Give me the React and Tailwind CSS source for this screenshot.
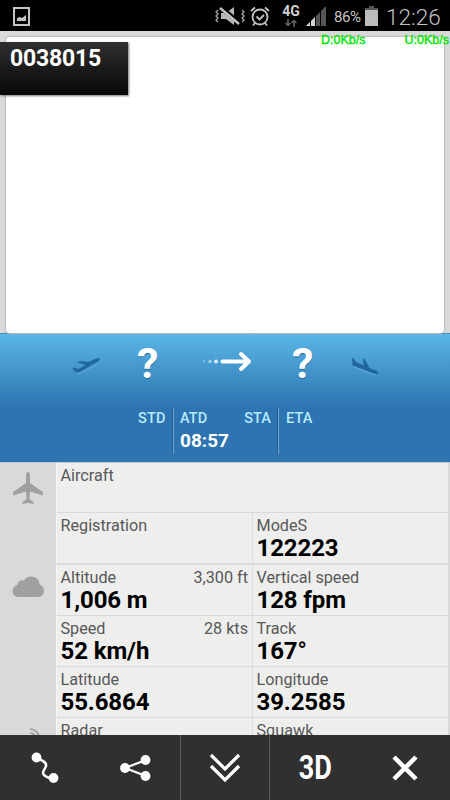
const FONT = 'font-[Roboto,sans-serif]';

const ROWS = [
  [{ label: 'Aircraft' }],
  [{ label: 'Registration' }, { label: 'ModeS', value: '122223' }],
  [
    { label: 'Altitude', value: '1,006 m', alt: '3,300 ft' },
    { label: 'Vertical speed', value: '128 fpm' },
  ],
  [
    { label: 'Speed', value: '52 km/h', alt: '28 kts' },
    { label: 'Track', value: '167°' },
  ],
  [
    { label: 'Latitude', value: '55.6864' },
    { label: 'Longitude', value: '39.2585' },
  ],
  [{ label: 'Radar' }, { label: 'Squawk' }],
];

function StatusBar() {
  return (
    <div className="flex h-[31px] shrink-0 items-start bg-black text-[#c4c4c4]">
      <svg className="mt-[7px] ml-[13px] shrink-0" width="17" height="19" viewBox="0 0 17 19">
        <path d="M1 1h15v17H1z" fill="none" stroke="currentColor" strokeWidth="2" />
        <path d="M4 14v-3l3-1 2 1 4-3v6z" fill="currentColor" />
      </svg>

      {/* Muted / vibrate */}
      <svg className="mt-[6px] ml-[185px] shrink-0" width="30" height="20" viewBox="0 0 30 20">
        <path d="M6 7h5l8-6v18l-8-6H6z" fill="#b8b8b8" />
        <path d="M5 1l20 16" stroke="#000" strokeWidth="4.500" />
        <path d="M5 2l19 16" stroke="#c4c4c4" strokeWidth="2.300" />
        <path d="M3 4l-2 2 2 2-2 2 2 2-2 2 2 2M27 4l2 2-2 2 2 2-2 2 2 2-2 2" fill="none" stroke="#a5a5a5" strokeWidth="1.300" />
      </svg>

      {/* Alarm */}
      <svg className="mt-[6px] ml-[5px] shrink-0" width="20" height="21" viewBox="0 0 20 21" fill="none" stroke="currentColor" strokeWidth="1.800">
        <circle cx="10" cy="11" r="7.500" />
        <path d="M6.500 10.500l3 3 4.500-4.500M1 5l4-3.500M19 5l-4-3.500M5 17l-2 2.500M15 17l2 2.500" />
      </svg>

      <div className="mt-[3px] ml-[12px] flex w-[18px] shrink-0 flex-col items-center">
        <span className="text-[14px] leading-[16px] font-bold text-[#d0d0d0]">4G</span>
        <svg width="12" height="8" viewBox="0 0 12 8" fill="none" stroke="#666" strokeWidth="1.500">
          <path d="M3 0v6.500M.5 4L3 6.500 5.500 4M9 8V1.500M6.500 4L9 1.500 11.500 4" />
        </svg>
      </div>

      {/* Signal strength */}
      <svg className="mt-[6px] ml-[6px] shrink-0" width="21" height="20" viewBox="0 0 21 20">
        <path d="M0 20L20 0v20z" fill="#565656" />
        <path d="M0 20L9 11v9z" fill="#d5d5d5" />
        <path d="M4.500 14v6M9.500 8v12M14.500 4v16" stroke="#000" strokeWidth="1" />
      </svg>
      <span className="mt-[8px] ml-[7px] w-[28px] shrink-0 text-[15px] leading-[18px] tracking-[-0.4px]">86%</span>

      {/* Battery */}
      <svg className="mt-[6px] ml-[3px] shrink-0" width="13" height="20" viewBox="0 0 13 20">
        <path d="M4 0h5v2h4v2H0V2h4z" fill="#565656" />
        <path d="M0 4h13v16H0z" fill="#bcbcbc" />
      </svg>
      <span className="mt-[4px] ml-[8px] text-[22.500px] leading-[26px] font-light">12:26</span>
    </div>
  );
}

function MapPanel() {
  return (
    <div className="relative h-[302px] shrink-0 bg-[#d9d9d9] px-[6px] pt-[6px]">
      <div className="h-[296px] rounded-[4px] bg-white shadow-[0_0_1px_1px_#bbb]" />
      <div className="absolute top-[11px] left-0 h-[53px] w-[127.500px] bg-linear-to-b from-[#303030] to-[#080808] pt-[3px] pl-[10px] text-[23px] leading-[28px] font-bold tracking-[-0.2px] text-white shadow-[1px_1px_2px_#777]">
        0038015
      </div>
      <div className="absolute top-[2px] right-[1px] flex gap-[39px] font-['Liberation_Sans',sans-serif] text-[12.500px] leading-[14px] text-[#00ee00] [-webkit-text-stroke:0.4px_#00dd00]">
        <span>D:0Kb/s</span>
        <span>U:0Kb/s</span>
      </div>
    </div>
  );
}

function FlightHeader() {
  return (
    <div className="h-[129px] shrink-0 border-t border-[#438bb5] bg-[#2d74b0] bg-linear-to-b from-[#5ab6e6] from-0% to-[#2d74b0] to-[58%]">
      <div className="flex h-[71px] items-start">
        <svg className="mt-[24px] ml-[71px] shrink-0" width="30" height="17" viewBox="0 0 30 17">
          <path d="M1 10l3-.5 3.500 1.500 7-4L6 4.200 9 3l9 1 6-3c2-.8 4.500-1 5 0 0 1-1 1.700-3 3L9 14l-4 .5z" fill="#2367a0" />
          <path d="M6 15.500h2.500l17-9" fill="none" stroke="#71b5df" strokeWidth=".7" />
        </svg>
        <span className="mt-[3px] ml-[36px] w-[22px] text-[43px] leading-[52px] font-bold text-white [text-shadow:0_1px_1px_#286898]">?</span>
        <svg className="mt-[17px] ml-[41px] shrink-0" width="52" height="21" viewBox="0 0 52 21" fill="none" stroke="#fff">
          <g fill="#fff" stroke="none">
            <circle cx="4" cy="10.500" r="1.400" opacity=".25" />
            <circle cx="10" cy="10.500" r="1.700" opacity=".5" />
            <circle cx="16" cy="10.500" r="2" opacity=".8" />
          </g>
          <path d="M22.500 10.500h25M41 3l8 7.500-8 7.500" strokeWidth="4" strokeLinecap="round" strokeLinejoin="round" />
        </svg>
        <span className="mt-[3px] ml-[40px] w-[22px] text-[43px] leading-[52px] font-bold text-white [text-shadow:0_1px_1px_#286898]">?</span>
        <svg className="mt-[22px] ml-[37px] shrink-0" width="28" height="21" viewBox="0 0 28 21">
          <path d="M1 2l1.500.3L5 6l8 3.500-1.500-7 2 .5 5 9 6.500 2.500c2 1 3 2 2 3-.5 1-2 .5-4 0L1.500 9.500z" fill="#2367a0" />
          <path d="M2 10.500L22 18.500l3 .5" fill="none" stroke="#71b5df" strokeWidth=".7" />
        </svg>
      </div>

      {/* Scheduled / actual times */}
      <div className="flex pt-[3px] text-[14.500px] leading-[18px] font-medium tracking-[0.1px] text-[#b7eaff]">
        <div className="h-[46px] w-[174px] border-r border-[#78a5cd] pt-[2px] pr-[7.500px] text-right shadow-[-1px_0_0_#205c92_inset]">STD</div>
        <div className="flex h-[46px] w-[105px] justify-between border-r border-[#78a5cd] pt-[2px] pr-[7px] pl-[6px] shadow-[-1px_0_0_#205c92_inset]">
          <div>
            ATD
            <div className="mt-px w-[50px] text-[19px] leading-[23px] font-bold tracking-normal text-white">08:57</div>
          </div>
          <span>STA</span>
        </div>
        <div className="pt-[2px] pl-[7px]">ETA</div>
      </div>
    </div>
  );
}

function Cell({ label, value, alt }) {
  return (
    <div className="min-w-0 flex-1 pt-[2px] pl-[3.500px]">
      <div className="flex justify-between pr-[4px] text-[16.200px] leading-[21px] text-[#585858]">
        <span>{label}</span>
        {alt && <span>{alt}</span>}
      </div>
      {value && <div className="text-[24px] leading-[25px] font-bold tracking-[-0.1px] text-black">{value}</div>}
    </div>
  );
}

function DataPanel() {
  return (
    <div className="flex h-[273px] shrink-0 overflow-hidden border-t border-[#c5c9cc] bg-[#d9d9d9]">
      <div className="flex w-[56px] shrink-0 flex-col items-center">
        <svg className="mt-[9px] shrink-0" width="32" height="32" viewBox="0 0 32 32" fill="#a0a0a0">
          <path d="M14 3c0-4 4-4 4 0v8l13 9v3.500l-13-4-.5 7.500 4 3v2L16 31l-5.500 1v-2l4-3-.5-7.500-13 4V20l13-9z" />
        </svg>
        <svg className="mt-[72px] shrink-0" width="32" height="22" viewBox="0 0 32 22" fill="#a0a0a0">
          <path d="M7 21C3 21 .5 18.500.5 15c0-3 2-5.500 5-6 0-3 3-5.500 6.500-4.500C13.500 2 16 .5 19 .5c5 0 8.500 3.500 8.500 8 3 1 4.500 3.500 4.500 6.300 0 3.700-2.500 6.200-6 6.200z" />
        </svg>
        <svg className="mt-[127px] ml-[11px] shrink-0" width="16" height="16" viewBox="0 0 16 16" fill="none" stroke="#999" strokeWidth="1.700">
          <path d="M4 4c5 0 9 4 9 9M4 8c3 0 5 2 5 5" />
        </svg>
      </div>
      <div className="mr-[2px] flex flex-1 flex-col">
        {ROWS.map((row, i) => (
          <div
            key={row[0].label}
            className={`flex shrink-0 border-l border-[#f7f7f7] bg-[#eeeeed] ${
              i === 1 ? 'h-[52px] border-b-2 border-b-[#d9d9d9]' : i === 0 ? 'h-[50px] border-b border-b-[#d9d9d9]' : 'h-[51px] border-b border-b-[#d9d9d9]'
            }`}
          >
            <Cell {...row[0]} />
            {row[1] && (
              <div className="flex w-[196px] shrink-0 border-l border-[#dddddc]">
                <Cell {...row[1]} />
              </div>
            )}
          </div>
        ))}
      </div>
    </div>
  );
}

function Toolbar() {
  return (
    <div className="flex h-[65px] shrink-0 bg-[#303030] text-white">
      <button className="flex w-[90px] items-center justify-center">
        <svg width="30" height="34" viewBox="0 0 30 34">
          <path d="M7 7c4 2 10 4 9 8s-5 6-2 9 5 3 9 4" fill="none" stroke="currentColor" strokeWidth="2.500" />
          <circle cx="6.500" cy="6.500" r="4.900" fill="currentColor" />
          <circle cx="23.500" cy="27" r="4.900" fill="currentColor" />
        </svg>
      </button>
      <button className="flex w-[90px] items-center justify-center">
        <svg width="32" height="30" viewBox="0 0 32 30">
          <path d="M27 7L6 15l21 8" fill="none" stroke="currentColor" strokeWidth="2.200" />
          <circle cx="6" cy="15" r="4.900" fill="currentColor" />
          <circle cx="26.500" cy="7" r="4.900" fill="currentColor" />
          <circle cx="26.500" cy="23" r="4.900" fill="currentColor" />
        </svg>
      </button>
      <button className="flex w-[90px] items-center justify-center border-x border-[#5b5b5b]">
        <svg className="mb-[2px]" width="32" height="32" viewBox="0 0 32 32" fill="none" stroke="currentColor" strokeWidth="3.200">
          <path d="M2 4l14 14L30 4M2 15l14 14 14-14" />
        </svg>
      </button>
      <button className="flex w-[90px] items-center justify-center text-[33px] font-bold">
        <span className="scale-x-[0.82] leading-[38px]">3D</span>
      </button>
      <button className="flex w-[90px] items-center justify-center">
        <svg width="26" height="26" viewBox="0 0 26 26" fill="none" stroke="currentColor" strokeWidth="4.500">
          <path d="M2 2l22 22M24 2L2 24" />
        </svg>
      </button>
    </div>
  );
}

export default function App() {
  return (
    <div className={`flex h-[800px] w-[450px] flex-col overflow-hidden bg-[#d9d9d9] ${FONT}`}>
      <StatusBar />
      <MapPanel />
      <FlightHeader />
      <DataPanel />
      <Toolbar />
    </div>
  );
}
